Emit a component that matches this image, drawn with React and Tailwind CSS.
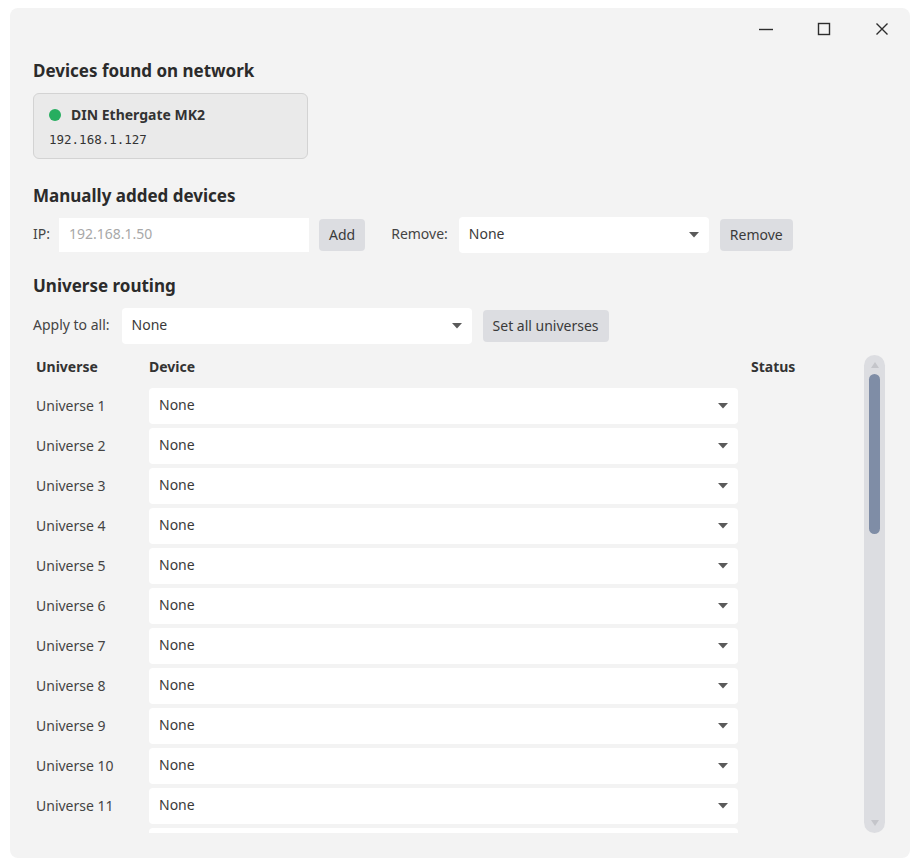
import { useState } from "react";

const font = { fontFamily: '"Noto Sans", "Open Sans", sans-serif' };

function Caret() {
    return (
        <svg width="10" height="6" viewBox="0 0 10 6" className="shrink-0">
            <path d="M0 0 H10 L5 5.5 Z" fill="#5a5a5a" />
        </svg>
    );
}

function Select({ value, className = "" }) {
    return (
        <div
            className={`flex h-[36px] items-center justify-between rounded-[4px] bg-white pl-[10px] pr-[10px] ${className}`}
        >
            <span className="-mt-[4px] text-[14px] text-[#3a3a3a]">{value}</span>
            <Caret />
        </div>
    );
}

function Button({ children, className = "" }) {
    return (
        <button
            className={`h-[32px] rounded-[4px] bg-[#dcdde1] px-[10px] pb-[2px] text-[14px] text-[#3a3a3a] ${className}`}
        >
            {children}
        </button>
    );
}

function WindowControls() {
    return (
        <div className="flex h-[40px] items-center justify-end gap-[42px] pr-[20px] pt-[2px]">
            <svg width="16" height="16" viewBox="0 0 16 16">
                <path d="M1 8.5 H15" stroke="#2d2d2d" strokeWidth="1.4" />
            </svg>
            <svg width="16" height="16" viewBox="0 0 16 16">
                <rect x="2.5" y="2.5" width="11" height="11" fill="none" stroke="#2d2d2d" strokeWidth="1.4" />
            </svg>
            <svg width="16" height="16" viewBox="0 0 16 16">
                <path d="M2.5 2.5 L13.5 13.5 M13.5 2.5 L2.5 13.5" stroke="#2d2d2d" strokeWidth="1.4" />
            </svg>
        </div>
    );
}

function Scrollbar() {
    return (
        <div className="flex w-[21px] shrink-0 flex-col items-center rounded-full bg-[#dcdde1] py-[4px]">
            <svg width="10" height="8" viewBox="0 0 10 8" className="mt-[2px]">
                <path d="M5 1 L9 7 H1 Z" fill="#c4c5ca" />
            </svg>
            <div className="mt-[5px] h-[160px] w-[11px] rounded-full bg-[#7f8da6]" />
            <div className="flex-1" />
            <svg width="10" height="8" viewBox="0 0 10 8" className="mb-[2px]">
                <path d="M1 1 H9 L5 7 Z" fill="#c4c5ca" />
            </svg>
        </div>
    );
}

export default function App() {
    const [devices] = useState([{ name: "DIN Ethergate MK2", ip: "192.168.1.127", online: true }]);
    const universes = Array.from({ length: 12 }, (_, i) => i + 1);

    return (
        <div className="h-[867px] w-[916px] bg-white pl-[10px] pr-[6px] pt-[8px]" style={font}>
            <div className="flex h-[850px] flex-col rounded-[8px] bg-[#f3f3f3]">
                <WindowControls />

                <div className="flex min-h-0 flex-1 flex-col pl-[23px] pr-[25px]">
                    <h2 className="mt-[11px] text-[17px] font-bold leading-[24px] text-[#2b2b2b]">
                        Devices found on network
                    </h2>
                    <div className="mt-[10px] flex gap-3">
                        {devices.map((d) => (
                            <div
                                key={d.ip}
                                className="h-[66px] w-[275px] rounded-[6px] border border-[#d3d3d3] bg-[#eaeaea] pl-[15px] pt-[10px]"
                            >
                                <div className="flex items-center gap-[10px]">
                                    <span
                                        className={`h-[12px] w-[12px] rounded-full ${d.online ? "bg-[#27ae60]" : "bg-[#c0392b]"}`}
                                    />
                                    <span className="text-[14px] font-bold text-[#333]">{d.name}</span>
                                </div>
                                <div
                                    className="mt-[6px] text-[12.5px] text-[#333]"
                                    style={{ fontFamily: '"DejaVu Sans Mono", "Liberation Mono", monospace' }}
                                >
                                    {d.ip}
                                </div>
                            </div>
                        ))}
                    </div>

                    <h2 className="mt-[25px] text-[17px] font-bold leading-[24px] text-[#2b2b2b]">
                        Manually added devices
                    </h2>
                    <div className="mt-[9px] flex items-center">
                        <span className="-mt-[4px] w-[26px] text-[14px] text-[#444]">IP:</span>
                        <div className="flex h-[34px] w-[250px] items-center bg-white px-[10px]">
                            <span className="-mt-[3px] text-[14px] text-[#a8a8a8]">192.168.1.50</span>
                        </div>
                        <Button className="ml-[10px]">Add</Button>
                        <span className="-mt-[4px] ml-[26px] text-[14px] text-[#444]">Remove:</span>
                        <Select value="None" className="ml-[11px] w-[250px]" />
                        <Button className="ml-[11px]">Remove</Button>
                    </div>

                    <h2 className="mt-[21px] text-[17px] font-bold leading-[24px] text-[#2b2b2b]">
                        Universe routing
                    </h2>
                    <div className="mt-[10px] flex items-center">
                        <span className="-mt-[3px] text-[14px] text-[#444]">Apply to all:</span>
                        <Select value="None" className="ml-[12px] w-[350px]" />
                        <Button className="ml-[11px]">Set all universes</Button>
                    </div>

                    <div className="mt-[11px] mb-[25px] flex min-h-0 flex-1">
                        <div className="min-h-0 flex-1 overflow-hidden pl-[3px]">
                            <div className="flex h-[22px] items-end text-[14px] font-bold text-[#333]">
                                <span className="w-[113px]">Universe</span>
                                <span className="w-[602px]">Device</span>
                                <span>Status</span>
                            </div>
                            <div className="mt-[11px] flex flex-col gap-[4px]">
                                {universes.map((u) => (
                                    <div key={u} className="flex items-center">
                                        <span className="-mt-[2px] w-[113px] text-[14px] text-[#444]">
                                            Universe {u}
                                        </span>
                                        <Select value="None" className="w-[589px]" />
                                    </div>
                                ))}
                            </div>
                        </div>
                        <Scrollbar />
                    </div>
                </div>
            </div>
        </div>
    );
}
